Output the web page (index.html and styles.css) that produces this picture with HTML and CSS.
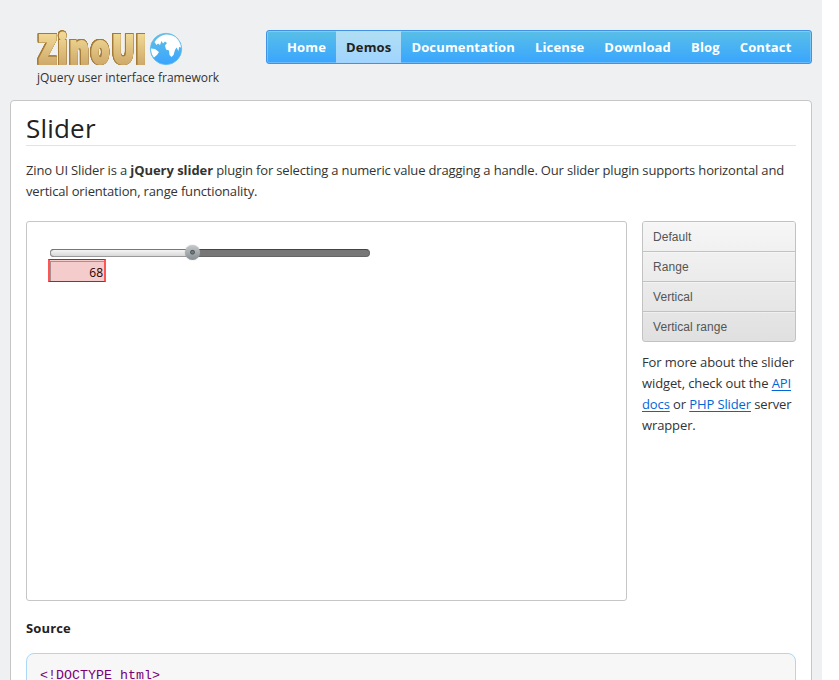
FILE: index.html
```html
<!DOCTYPE html>
<html lang="en">
<head>
<meta charset="utf-8">
<title>Zino UI - Slider</title>
<link rel="stylesheet" href="styles.css">
</head>
<body>
<div class="page">
  <header class="header">
    <div class="brand">
      <svg class="logo" width="150" height="40" viewBox="0 0 150 40">
        <defs>
          <linearGradient id="gold" x1="0" y1="6" x2="0" y2="37" gradientUnits="userSpaceOnUse">
            <stop offset="0" stop-color="#f0d793"/><stop offset="1" stop-color="#cda769"/>
          </linearGradient>
          <linearGradient id="sea" x1="0" y1="0" x2="0" y2="1">
            <stop offset="0" stop-color="#61c1e5"/><stop offset="1" stop-color="#39a4ff"/>
          </linearGradient>
        </defs>
        <g class="logo-outline"><text class="logo-text" transform="scale(.75 1)" x="3.500 29 44.500 73 101.500 133.500" y="35">ZinoUI</text></g>
        <circle cx="130" cy="20" r="15.700" fill="url(#sea)" stroke="#65bde9" stroke-width=".8"/>
        <path fill="#fff" d="M118.500 13Q123 6 130 5.500 136 5.500 140 8.500 144.500 13 145 18.500L143 18 142.500 22 140.500 18.500 139 21 137.500 26 135.500 28 133.500 26 133 21.500 130 20.500 129 16.500 131 14 129 12.500 127 14.500 125.500 12 124 16 122 14.500 120.500 16zM115 19.500L119 20 123 23 121 26 118 28.500Q115 25 115 19.500z"/>
      </svg>
      <div class="tagline">jQuery user interface framework</div>
    </div>
    <nav class="nav">
      <a>Home</a><a class="active">Demos</a><a>Documentation</a><a>License</a><a>Download</a><a>Blog</a><a>Contact</a>
    </nav>
  </header>
  <main class="content">
    <h1>Slider</h1>
    <p class="intro">Zino UI Slider is a <b>jQuery slider</b> plugin for selecting a numeric value dragging a handle. Our slider plugin supports horizontal and vertical orientation, range functionality.</p>
    <div class="columns">
      <section class="demo">
        <div class="slider"><div class="fill"></div><div class="handle"></div></div>
        <div class="value">68</div>
      </section>
      <aside class="side">
        <div class="menu"><a>Default</a><a>Range</a><a>Vertical</a><a>Vertical range</a></div>
        <p class="more">For more about the slider widget, check out the <a>API docs</a> or <a>PHP Slider</a> server wrapper.</p>
      </aside>
    </div>
    <h2>Source</h2>
    <pre class="source">&lt;!DOCTYPE html&gt;</pre>
  </main>
</div>
</body>
</html>
```
FILE: styles.css
```css
* { box-sizing: border-box; }
html { background: #fff; }
body { margin: 0; height: 680px; overflow: hidden; font: 13px/21px "Open Sans", sans-serif; color: #333; }
.page { width: 822px; height: 680px; padding: 0 10px; background: #eff0f2; overflow: hidden; }
.header { display: flex; justify-content: space-between; height: 100px; padding: 29px 0 0 26px; }
.brand { width: 220px; }
.logo { display: block; overflow: visible; }
.logo-outline { filter: drop-shadow(.5px 0 #a37b37) drop-shadow(-.5px 0 #a37b37) drop-shadow(0 .5px #a37b37) drop-shadow(0 -.5px #a37b37); }
.logo-text { font: 800 40px "Open Sans", sans-serif; fill: url(#gold); stroke: url(#gold); stroke-width: 2px; }
.tagline { margin: -2px 0 0 1px; white-space: nowrap; font-size: 12px; }
.nav { display: flex; width: 546px; height: 34px; margin-top: 1px; padding-left: 10px; border: 1px solid #3f92e8; border-radius: 3px; background: linear-gradient(#59bfe6, #39a5ff); box-shadow: inset 0 0 0 1px rgba(255,255,255,.25); }
.nav a { padding: 0 10px; color: #fff; font-weight: 700; line-height: 33px; letter-spacing: .15px; }
.nav .active { color: #222; background: linear-gradient(#b0dff2, #a0d4ff); }
.content { height: 600px; padding: 10px 15px 0; border: 1px solid #c6c6c6; border-radius: 4px; background: #fff; }
h1 { height: 35px; margin: 0; border-bottom: 1px solid #e3e3e3; color: #222; font-size: 26px; font-weight: 400; line-height: 34px; letter-spacing: .2px; }
.intro { margin: 14px 0 19px; letter-spacing: -.16px; }
.intro b { letter-spacing: -.05px; }
.columns { display: flex; gap: 15px; height: 380px; }
.demo { width: 601px; height: 380px; padding: 27px 0 0 22px; border: 1px solid #c6c6c6; border-radius: 3px; }
.slider { display: flex; align-items: center; width: 320px; height: 8px; margin-left: 1px; border: 1px solid #666; border-top-color: #444; border-radius: 4px; background: #777; }
.fill { flex: none; width: 142px; height: 8px; margin-left: -1px; border: 1px solid #999; border-top-color: #777; border-right: 0; border-radius: 4px 0 0 4px; background: linear-gradient(#f4f4f4, #d8d8d8); }
.handle { flex: none; width: 15px; height: 15px; margin: -1px 0 1px -7px; border-radius: 50%; background: radial-gradient(circle at 50% 48%, #777 0 1px, #555d61 1.500px 2px, transparent 2.800px), linear-gradient(#c5c9cb, #868e92); box-shadow: 0 0 1px #999; }
.value { width: 58px; height: 23px; margin-top: 2px; margin-left: -1px; padding-right: 1px; border: 2px solid #f55; border-top: 1px solid #f00; border-bottom: 1px solid #f00; background: #f5cccc; box-shadow: inset 0 1px #f5cccc, inset 1px 2px #a88f8f; color: #200; text-align: right; font-size: 12px; line-height: 25px; }
.side { width: 154px; }
.menu { height: 121px; border: 1px solid #c2c2c2; border-radius: 3px; background: linear-gradient(#f6f6f6, #e0e0e0); }
.menu a { display: block; height: 30px; padding-left: 10px; border-bottom: 1px solid #c2c2c2; box-shadow: inset 0 1px rgba(255,255,255,.4); color: #555; font: 12px/31px "Liberation Sans", sans-serif; letter-spacing: .06px; }
.menu a:last-child { height: 29px; border: 0; }
.more { margin: 10px 0 0; letter-spacing: -.11px; }
.more a { color: #0067d8; text-decoration: underline; text-underline-offset: 2px; }
h2 { margin: 17px 0 14px; color: #222; font-size: 13px; line-height: 21px; letter-spacing: .15px; }
.source { height: 100px; margin: 0; padding: 12px 13px; border: 1px solid #acd8f5; border-radius: 8px; background: #f7f7f7; color: #707; font: 13.330px/19px "Liberation Mono", monospace; }
```
